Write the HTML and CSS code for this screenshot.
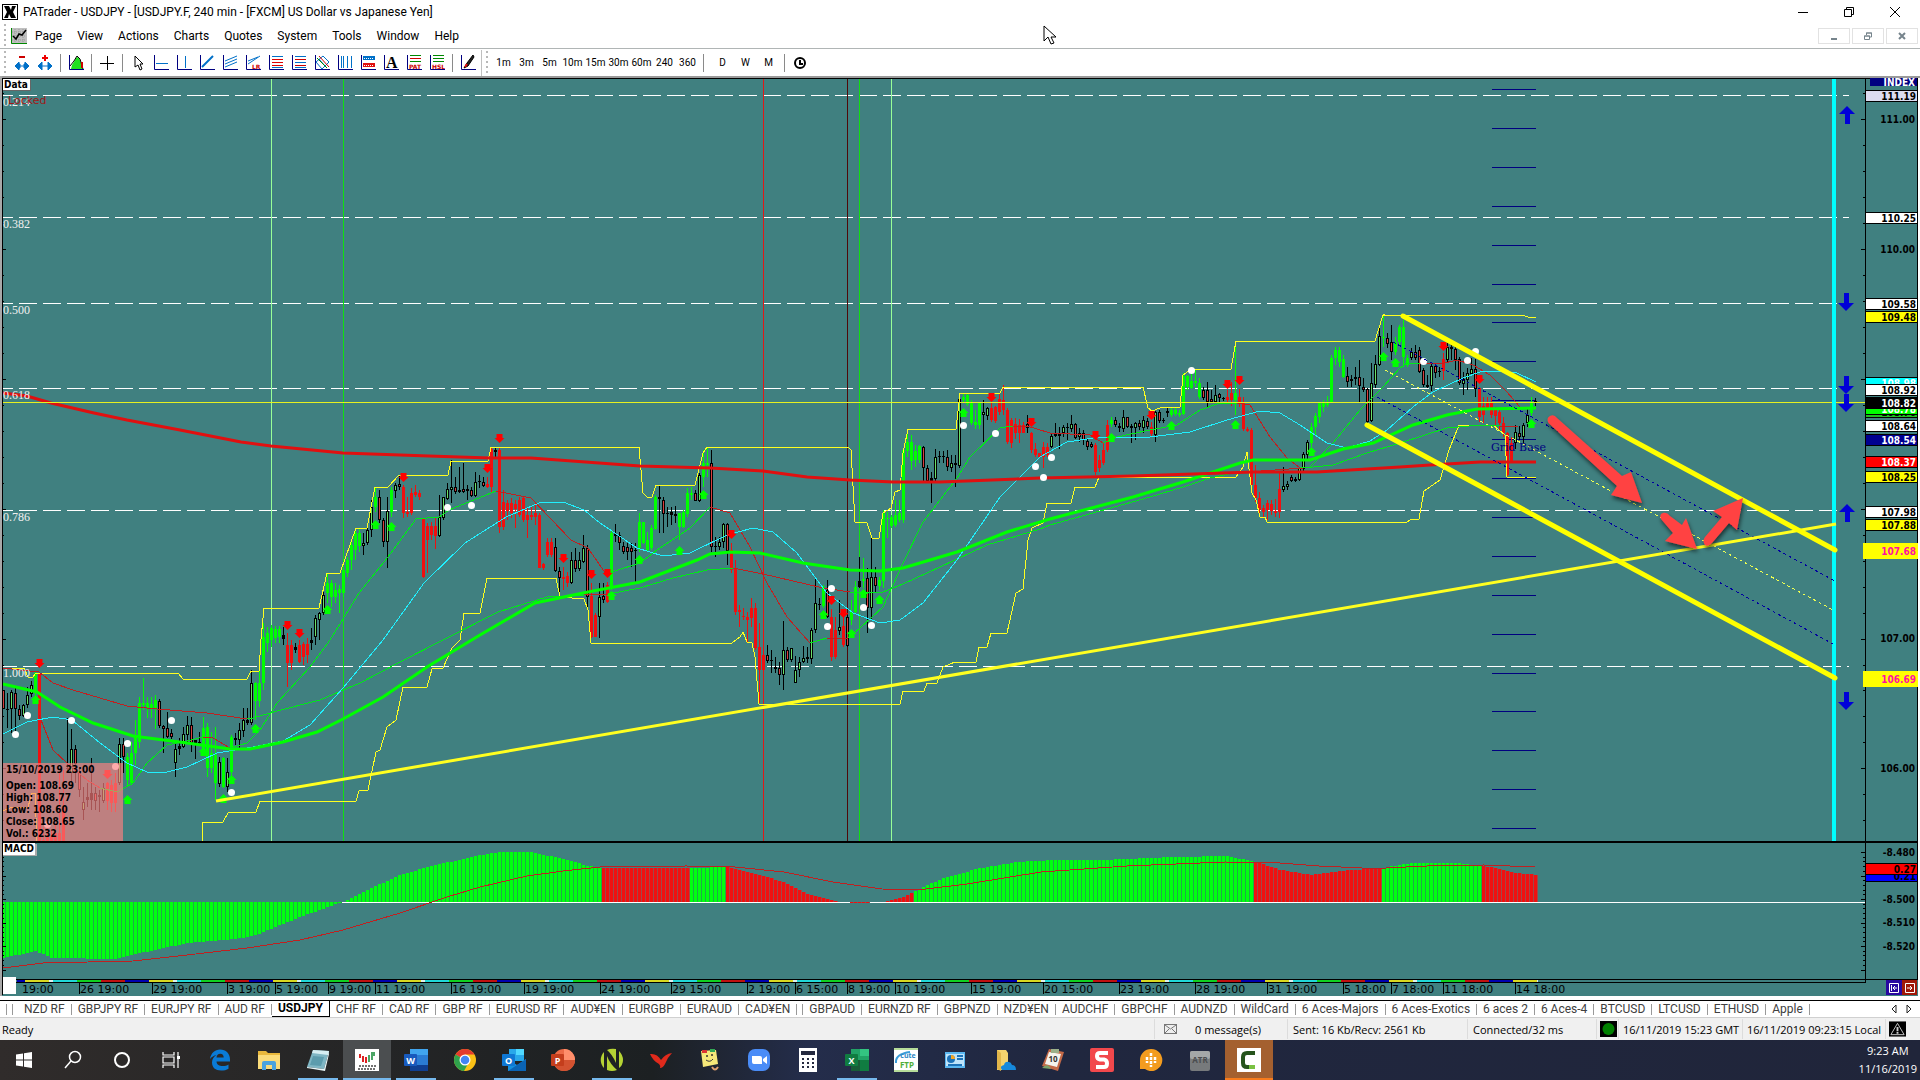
FILE: index.html
```html
<!DOCTYPE html>
<html lang="en">
<head>
    <meta charset="UTF-8">
    <meta name="viewport" content="width=device-width, initial-scale=1.0">
    <title>PATrader - USDJPY</title>
    <link rel="stylesheet" href="styles.css">
</head>
<body>
    <!-- Title bar -->
    <header class="title-bar">
        <svg class="app-icon" viewBox="0 0 16 16"><rect width="16" height="16" fill="#000"/><rect x="1" y="1" width="14" height="14" fill="#fff"/><path d="M2 2h5l2 4 1-4h4l-3 6 3 6H9L7 10l-1 4H2l3-6z" fill="#000"/></svg>
        <h1>PATrader - USDJPY - [USDJPY.F, 240 min - [FXCM] US Dollar vs Japanese Yen]</h1>
        <div class="window-buttons">
            <button aria-label="Minimize"><svg viewBox="0 0 12 12"><path d="M1 6.500h10"/></svg></button>
            <button aria-label="Restore"><svg viewBox="0 0 12 12"><path d="M1.500 3.500h7v7h-7zM3.500 3.500v-2h7v7h-2"/></svg></button>
            <button aria-label="Close"><svg viewBox="0 0 12 12"><path d="M1 1l10 10M11 1L1 11"/></svg></button>
        </div>
    </header>

    <!-- Menu -->
    <nav class="menu-bar">
        <span class="grip"></span>
        <svg class="menu-icon" viewBox="0 0 16 16"><rect width="16" height="16" fill="#c0c0c0"/><path d="M4 1v14M8 1v14M12 1v14M1 4h14M1 8h14M1 12h14" stroke="#999" stroke-dasharray="1 1"/><path d="M.5 0v15.500H16" stroke="#080" fill="none"/><path d="M2 8l3 3 3-5 3 1 4-5" stroke="#000" stroke-width="1.500" fill="none"/></svg>
        <a href="#">Page</a>
        <a href="#">View</a>
        <a href="#">Actions</a>
        <a href="#">Charts</a>
        <a href="#">Quotes</a>
        <a href="#">System</a>
        <a href="#">Tools</a>
        <a href="#">Window</a>
        <a href="#">Help</a>
        <div class="child-buttons">
            <button aria-label="Minimize chart"><svg viewBox="0 0 10 10"><path d="M2 8h6" stroke-width="2"/></svg></button>
            <button aria-label="Restore chart"><svg viewBox="0 0 10 10"><path d="M1.500 5h5v3.500h-5zM1 5h6M3.500 4V2h5v4H7M3 2h6"/></svg></button>
            <button aria-label="Close chart"><svg viewBox="0 0 10 10"><path d="M2 2l6 6M8 2L2 8" stroke-width="2"/></svg></button>
        </div>
    </nav>

    <!-- Drawing tools and time frames -->
    <div class="toolbar">
        <span class="grip"></span>
        <div class="tools" id="tools"></div>
        <span class="separator tall"></span>
        <span class="grip"></span>
        <div class="frames">
            <button>1m</button><button>3m</button><button>5m</button><button>10m</button><button>15m</button><button>30m</button><button>60m</button><button>240</button><button>360</button>
        </div>
        <span class="separator"></span>
        <div class="frames">
            <button>D</button><button>W</button><button>M</button>
        </div>
        <span class="separator"></span>
        <button class="tool" aria-label="Time"><svg viewBox="0 0 16 16"><circle cx="8" cy="8" r="5" fill="none" stroke="#000" stroke-width="2"/><path d="M8 5v4h3" fill="none" stroke="#000" stroke-width="2"/></svg></button>
    </div>

    <!-- Price chart and MACD -->
    <main class="chart">
        <svg id="chart" viewBox="0 76 1920 920" role="img" aria-label="USDJPY 240 min chart"></svg>
    </main>

    <nav class="tabs">
        <span class="divider"></span><span class="divider"></span>
        <a href="#">NZD RF</a>
        <a href="#">GBPJPY RF</a>
        <a href="#">EURJPY RF</a>
        <a href="#">AUD RF</a>
        <a href="#" class="active">USDJPY</a>
        <a href="#">CHF RF</a>
        <a href="#">CAD RF</a>
        <a href="#">GBP RF</a>
        <a href="#">EURUSD RF</a>
        <a href="#">AUD¥EN</a>
        <a href="#">EURGBP</a>
        <a href="#">EURAUD</a>
        <a href="#">CAD¥EN</a>
        <span class="divider second"></span>
        <a href="#">GBPAUD</a>
        <a href="#">EURNZD RF</a>
        <a href="#">GBPNZD</a>
        <a href="#">NZD¥EN</a>
        <a href="#">AUDCHF</a>
        <a href="#">GBPCHF</a>
        <a href="#">AUDNZD</a>
        <a href="#">WildCard</a>
        <a href="#">6 Aces-Majors</a>
        <a href="#">6 Aces-Exotics</a>
        <a href="#">6 aces 2</a>
        <a href="#">6 Aces-4</a>
        <a href="#">BTCUSD</a>
        <a href="#">LTCUSD</a>
        <a href="#">ETHUSD</a>
        <a href="#">Apple</a>
        <div class="tab-scroll">
            <button aria-label="Scroll left"><svg viewBox="0 0 8 10"><path d="M6 1L2 5l4 4z"/></svg></button>
            <button aria-label="Scroll right"><svg viewBox="0 0 8 10"><path d="M2 1l4 4-4 4z"/></svg></button>
        </div>
    </nav>

    <footer class="status-bar">
        <span class="ready">Ready</span>
        <span class="cell messages"><svg viewBox="0 0 14 12"><rect x=".5" y="1.500" width="12" height="9" fill="#eee" stroke="#777"/><path d="M1 2l5.500 4L12 2M1 10l4-4M12 10L8 6" stroke="#777" fill="none"/></svg>0 message(s)</span>
        <span class="cell traffic">Sent: 16 Kb/Recv: 2561 Kb</span>
        <span class="cell connection">Connected/32 ms</span>
        <span class="cell lamp"><svg viewBox="0 0 17 16"><rect width="17" height="16" fill="#000"/><ellipse cx="8.500" cy="8" rx="6" ry="6" fill="#008000"/></svg></span>
        <span class="cell gmt">16/11/2019 15:23 GMT</span>
        <span class="cell local">16/11/2019 09:23:15 Local</span>
        <span class="cell alert"><svg viewBox="0 0 18 16"><rect width="18" height="16" fill="#000"/><path d="M9 2l7 12H2z" fill="none" stroke="#ccc"/><path d="M9 6v4M9 11v2" stroke="#ccc" stroke-width="2"/></svg></span>
    </footer>

    <!-- Windows taskbar -->
    <div class="taskbar">
        <div class="taskbar-items">
            <button class="task" aria-label="Start"><svg viewBox="0 0 24 24"><path d="M4 6.500l7-1v6H4zM12 5.300l8-1.300v7.500h-8zM4 12.500h7v6l-7-1zM12 12.500h8V20l-8-1.300z" fill="#fff"/></svg></button>
            <button class="task" aria-label="Search"><svg viewBox="0 0 24 24"><circle cx="14" cy="9" r="5.500" fill="none" stroke="#fff" stroke-width="1.500"/><path d="M10 13l-6 7" stroke="#fff" stroke-width="1.500"/></svg></button>
            <button class="task" aria-label="Cortana"><svg viewBox="0 0 24 24"><circle cx="12" cy="12" r="7" fill="none" stroke="#fff" stroke-width="2"/></svg></button>
            <button class="task" aria-label="Task view"><svg viewBox="0 0 24 24"><path d="M4 4v3h11V4M4 20v-3h11v3M4 9h11v6H4zM19 4v16" fill="none" stroke="#fff" stroke-width="1.200"/><path d="M18 8h3v3h-3z" fill="#fff"/></svg></button>
            <button class="task" aria-label="Edge"><svg viewBox="0 0 24 24"><path d="M2 11C3 5 7 1.500 12 1.500c6 0 10 4 10 10v2H8.500c.3 3.500 3 4.500 6 4.500 2.500 0 4.500-.7 6-1.600v4.300C18.500 22 16 22.500 13 22.500 7.500 22.500 4 19.500 4 14.500c0-3.500 2-6 4.500-7.500C6 7.500 3.500 9 2 11zm6.500-1.500h7.200C15.700 7 14.500 5.700 12.300 5.700 10 5.700 8.700 7.200 8.500 9.500z" fill="#0a7bd6"/></svg></button>
            <button class="task" aria-label="File Explorer"><svg viewBox="0 0 24 24"><path d="M1 3h8l2 2h12v16H1z" fill="#e9b83c"/><path d="M1 7h22v14H1z" fill="#fbdc7a"/><path d="M5 22v-7q0-2 2-2h10q2 0 2 2v7h-4v-5H9v5z" fill="#4aa3df"/></svg></button>
            <button class="task running" aria-label="Notepad"><svg viewBox="0 0 24 24"><path d="M7 2l16 1-5 18L1 19z" fill="#7fb6c4"/><path d="M7 2l16 1-1 4L6 5z" fill="#d6eef2"/><path d="M1 19l17 2 5-18v3l-4 17L1 20z" fill="#e8f6f8"/><path d="M7 8l11 1-3 9-11-1z" fill="#5c9cad"/></svg></button>
            <button class="task running current" aria-label="PATrader"><svg viewBox="0 0 24 24"><rect y="1" width="24" height="22" fill="#fff"/><path d="M5 6v4M8 8v6M11 9v6" stroke="#d22" stroke-width="2"/><path d="M14 7v7M17 4v8M19 4v4" stroke="#183" stroke-width="1.500"/><path d="M4 18h17M3 21h18" stroke="#444" stroke-width="1.500" stroke-dasharray="2 1"/></svg></button>
            <button class="task running" aria-label="Word"><svg viewBox="0 0 24 24"><path d="M6 1h18v22H6z" fill="#2b7cd3"/><path d="M6 1h18v6H6z" fill="#41a5ee"/><path d="M6 17h18v6H6z" fill="#103f91"/><rect y="6" width="13" height="12" rx="1" fill="#185abd"/><text x="6.500" y="15.500" class="letter">W</text></svg></button>
            <button class="task" aria-label="Chrome"><svg viewBox="0 0 24 24"><circle cx="12" cy="12" r="11" fill="#fbc116"/><path d="M12 12L2.500 6.500A11 11 0 0 1 21.500 6.500H12z" fill="#e33b2e"/><path d="M12 12L2.500 6.500A11 11 0 0 0 11 23l5-9z" fill="#2fa24c"/><circle cx="12" cy="12" r="5.500" fill="#fff"/><circle cx="12" cy="12" r="4.300" fill="#4285f4"/></svg></button>
            <button class="task running" aria-label="Outlook"><svg viewBox="0 0 24 24"><path d="M7 1h15v12H7z" fill="#28a8ea"/><path d="M14 1h8v6h-8z" fill="#50d9ff"/><path d="M6 11l9 6 9-6v12H6z" fill="#1490df"/><path d="M6 23l18-12v12z" fill="#0a64b5"/><rect y="6" width="13" height="12" rx="1" fill="#0f78d4"/><text x="6.500" y="15.500" class="letter">O</text></svg></button>
            <button class="task" aria-label="PowerPoint"><svg viewBox="0 0 24 24"><circle cx="13" cy="12" r="11" fill="#ed6c47"/><path d="M13 1a11 11 0 0 1 11 11H13z" fill="#ff8f6b"/><path d="M2 12h22a11 11 0 0 1-22 0z" fill="#d35230"/><rect y="6" width="13" height="12" rx="1" fill="#c43e1c"/><text x="6.500" y="15.500" class="letter">P</text></svg></button>
            <button class="task running" aria-label="NinjaTrader"><svg viewBox="0 0 24 24"><path d="M4 4a11.500 11.500 0 0 0 0 16z" fill="#b5d334"/><path d="M7 2Q11 0 16 1v14Q12 6 7 2z" fill="#b5d334"/><path d="M7 8q3 8 10 14-5 2-10 0z" fill="#b5d334"/><path d="M19 3q4 4 4 9t-4 8z" fill="#b5d334"/></svg></button>
            <button class="task" aria-label="Red bird"><svg viewBox="0 0 24 24"><path d="M1 6q7-1 11 6Q16 6 23 5q-5 5-7 11-2 4-5 4 1-2-1-4Q4 13 1 6z" fill="#e02a1c"/></svg></button>
            <button class="task" aria-label="Notes"><svg viewBox="0 0 24 24"><path d="M3 3l15-1 2 14-15 3z" fill="#f6e87a"/><path d="M4 2h5v3H4z" fill="#d33"/><path d="M12 1h5v3h-5z" fill="#3a5"/><circle cx="9" cy="8" r="1" fill="#333"/><circle cx="14" cy="7" r="1" fill="#333"/><path d="M8 12q4 3 7-1" fill="none" stroke="#333"/><path d="M14 19q3 5 6 0" fill="none" stroke="#e0a070" stroke-width="2"/></svg></button>
            <button class="task" aria-label="Zoom"><svg viewBox="0 0 24 24"><rect x="1" y="1" width="22" height="22" rx="7" fill="#4a8cf7"/><path d="M5 8h8q2 0 2 2v6H7q-2 0-2-2zM16 11l4-3v8l-4-3z" fill="#fff"/></svg></button>
            <button class="task" aria-label="Calculator"><svg viewBox="0 0 24 24"><path d="M3 0h18v24H3z" fill="#fff"/><path d="M5 3h14v4H5z" fill="#24293f"/><path d="M6 11h13M6 15h13M6 19h13" stroke="#24293f" stroke-width="2" stroke-dasharray="2 3"/></svg></button>
            <button class="task running" aria-label="Excel"><svg viewBox="0 0 24 24"><path d="M6 1h18v22H6z" fill="#21a366"/><path d="M15 1h9v7h-9z" fill="#33c481"/><path d="M6 12h9v11H6z" fill="#185c37"/><path d="M15 12h9v11h-9z" fill="#107c41"/><rect y="6" width="13" height="12" rx="1" fill="#107c41"/><text x="6.500" y="15.500" class="letter">X</text></svg></button>
            <button class="task" aria-label="CuteFTP"><svg viewBox="0 0 24 24"><rect width="24" height="24" fill="#fff"/><path d="M0 0h24v2H0zM0 22h24v2H0z" fill="#b6dc9a"/><path d="M2 15Q1 6 16 4" fill="none" stroke="#3a9bd8" stroke-width="2"/><text x="14" y="10" class="logo cute">cute</text><text x="13" y="20" class="logo ftp">FTP</text></svg></button>
            <button class="task" aria-label="Control panel"><svg viewBox="0 0 24 24"><rect x="2" y="4" width="20" height="16" fill="#5ab7f0"/><rect x="3" y="6" width="18" height="12" fill="#bfe4fa"/><circle cx="8" cy="11" r="4" fill="#1c72b8"/><path d="M8 11V7a4 4 0 0 1 4 4z" fill="#f5a623"/><path d="M14 8h6M14 11h6M5 17h14" stroke="#1c72b8" stroke-width="2"/></svg></button>
            <button class="task" aria-label="OneDrive folder"><svg viewBox="0 0 24 24"><path d="M5 2h9l2 3v17H5z" fill="#f5d36e"/><path d="M5 2l4 3v18l-4-2z" fill="#e2b64a"/><path d="M10 22q-3-4 2-5 1-4 5-3 2 0 3 3 4 0 4 5z" fill="#1689dc"/></svg></button>
            <button class="task" aria-label="Planner"><svg viewBox="0 0 24 24"><path d="M8 1l15 3-6 19-16-5z" fill="#c46a48"/><path d="M8 4l12 2-4 13-12-3z" fill="#f4f4ee"/><path d="M10 1h8v4h-8z" fill="#9ab08a"/><text x="12" y="14" class="logo ten">10</text><path d="M1 20q6-6 9 1z" fill="#7ea36a"/></svg></button>
            <button class="task" aria-label="Snagit"><svg viewBox="0 0 24 24"><rect width="24" height="24" rx="2" fill="#f2484c"/><path d="M18 5h-8Q7 5 7 8t3 3.500h4q3 .5 3 4T14 19H6" fill="none" stroke="#fff" stroke-width="4"/></svg></button>
            <button class="task" aria-label="Orange app"><svg viewBox="0 0 24 24"><path d="M12 1a11 11 0 1 1-6 20H1v-9A11 11 0 0 1 12 1z" fill="#f39c1f"/><path d="M8 9v6M12 5v14M16 9v6" stroke="#fff" stroke-width="2.500" stroke-dasharray="3 1"/></svg></button>
            <button class="task" aria-label="ATR"><svg viewBox="0 0 24 24"><rect x="2" y="3" width="20" height="20" rx="2" fill="#777a7c"/><rect x="2" y="3" width="20" height="8" rx="2" fill="#a4a7a8"/><text x="12" y="15" class="logo atr">ATR</text></svg></button>
            <button class="task recording" aria-label="Camtasia"><svg viewBox="0 0 24 24"><rect width="24" height="24" fill="#fff"/><path d="M18 5h-8Q6 5 6 9v6q0 4 4 4h8" fill="none" stroke="#26541c" stroke-width="4"/><path d="M12 17h6v4h-6z" fill="#7ac143"/></svg></button>
        </div>
        <div class="clock"><span>9:23 AM</span><span>11/16/2019</span></div>
    </div>

    <svg class="pointer" viewBox="0 0 14 20"><path d="M1 1v15l4-4 3 7 3-1-3-6h5z" fill="#fff" stroke="#000"/></svg>

    <script src="script.js"></script>
</body>
</html>
```

FILE: styles.css
```css
* {
    box-sizing: border-box;
}

body {
    margin: 0;
    min-height: 100vh;
    display: flex;
    flex-direction: column;
    background-color: #ffffff;
    color: #000000;
    font-family: Roboto, "Open Sans", sans-serif;
    font-size: 12px;
    overflow-x: hidden;
}

a {
    color: inherit;
    text-decoration: none;
}

button {
    margin: 0;
    padding: 0;
    border: none;
    background: none;
    color: inherit;
    font: inherit;
    cursor: pointer;
}

svg {
    display: block;
}

/* Title bar */
.title-bar {
    display: flex;
    align-items: center;
    height: 24px;
    padding-left: 2px;
    gap: 5px;
}

.app-icon {
    width: 16px;
    height: 16px;
}

h1 {
    margin: 0;
    font-size: 12px;
    font-weight: normal;
}

.window-buttons {
    display: flex;
    margin-left: auto;
    padding-right: 2px;
}

.window-buttons button {
    width: 46px;
    height: 20px;
    display: flex;
    justify-content: center;
    align-items: center;
}

.window-buttons svg {
    width: 12px;
    height: 12px;
    fill: none;
    stroke: #000;
}

/* Menu */
.menu-bar {
    display: flex;
    align-items: center;
    height: 24px;
    padding: 0 2px 0 4px;
}

.menu-icon {
    width: 16px;
    height: 16px;
    margin: 0 8px 0 5px;
}

.menu-bar a {
    margin-right: 15px;
}

.child-buttons {
    display: flex;
    gap: 2px;
    margin-left: auto;
}

.child-buttons button {
    width: 32px;
    height: 16px;
    border: 1px solid #e2e2e2;
    display: flex;
    justify-content: center;
    align-items: center;
}

.child-buttons svg {
    width: 10px;
    height: 10px;
    fill: none;
    stroke: #76848c;
}

.grip {
    width: 2px;
    height: 24px;
    background: repeating-linear-gradient(#b8b8b8 0 2px, #fff 2px 5px);
}

/* Toolbar */
.toolbar {
    display: flex;
    align-items: center;
    height: 28px;
    padding-left: 4px;
    border-top: 1px solid #b0b5b5;
}

.tools,
.frames {
    display: flex;
    align-items: center;
}

.tools {
    padding-left: 4px;
}

.tool {
    width: 23px;
    height: 24px;
    display: flex;
    justify-content: center;
    align-items: center;
}

.tool svg {
    width: 16px;
    height: 16px;
}

.frames {
    padding-left: 4px;
}

.frames button {
    width: 23px;
    font-size: 10px;
}

.separator {
    width: 1px;
    height: 18px;
    margin: 0 3px 0 4px;
    background-color: #8a8a8a;
}

.separator.tall {
    height: 26px;
    margin: 0 4px 0 2px;
    background-color: #c0c0c0;
}

.bold-tool {
    font: bold 16px "Liberation Serif", serif;
}

.tag {
    font: bold 6px "DejaVu Sans", sans-serif;
    fill: #c00;
}

/* Chart */
.chart svg {
    width: 100%;
    height: auto;
}

#chart text {
    white-space: pre;
}

.crisp {
    shape-rendering: crispEdges;
}

.line {
    fill: none;
    stroke-width: 1;
    shape-rendering: crispEdges;
}

.thick {
    stroke-width: 3;
    shape-rendering: auto;
}

.channel {
    stroke-width: 5;
    stroke-linecap: round;
    shape-rendering: auto;
}

.price-text {
    font: bold 10px "DejaVu Sans Condensed", "DejaVu Sans", sans-serif;
    text-anchor: end;
}

.date-text {
    font: 11px "DejaVu Sans", sans-serif;
}

.level-text {
    font: 12px "Liberation Serif", serif;
    fill: #f0f0f0;
}

.locked-text {
    font: 11px "DejaVu Sans", sans-serif;
    fill: #a01818;
}

.grid-base {
    font: 11px "DejaVu Serif", serif;
    fill: #000080;
}

.info-text {
    font: bold 10px "DejaVu Sans Condensed", "DejaVu Sans", sans-serif;
}

/* Page tabs */
.tabs {
    display: flex;
    align-items: center;
    height: 18px;
    margin-top: 4px;
    padding-left: 6px;
    border-top: 1px solid #000;
    border-bottom: 1px solid #d0d0d0;
    background-color: #fff;
    color: #404040;
}

.divider {
    flex: none;
    width: 6px;
    height: 11px;
    border-left: 1px solid #999;
}

.divider.second {
    border-left: none;
    border-right: 1px solid #999;
}

.tabs a {
    display: flex;
    align-items: center;
    height: 11px;
    padding: 0 6px;
    border-right: 1px solid #999;
    white-space: nowrap;
}

.tabs a.active {
    height: 17px;
    margin-top: -1px;
    border-right: 1px solid #000;
    border-bottom: 1px solid #000;
    color: #000;
    font-weight: bold;
}

.tab-scroll {
    display: flex;
    gap: 7px;
    margin-left: auto;
    padding-right: 7px;
}

.tab-scroll svg {
    width: 8px;
    height: 10px;
    fill: none;
    stroke: #222;
}

/* Status bar */
.status-bar {
    display: flex;
    align-items: center;
    height: 22px;
    background-color: #f0f0f0;
    font-family: "Open Sans", "Noto Sans", sans-serif;
    font-size: 11px;
}

.ready {
    flex: 1;
    padding-left: 2px;
}

.cell {
    display: flex;
    align-items: center;
    height: 20px;
    padding-left: 5px;
    border-left: 1px solid #dcdcdc;
    white-space: nowrap;
}

.messages {
    width: 133px;
    gap: 17px;
    padding-left: 9px;
}

.messages svg {
    width: 14px;
    height: 12px;
}

.traffic {
    width: 180px;
}

.connection {
    width: 129px;
}

.lamp {
    width: 22px;
    padding-left: 3px;
}

.lamp svg,
.alert svg {
    width: 17px;
    height: 16px;
}

.gmt {
    width: 124px;
    padding-left: 4px;
}

.local {
    width: 143px;
    padding-left: 4px;
}

.alert {
    width: 35px;
    padding-left: 3px;
}

/* Taskbar */
.taskbar {
    display: flex;
    flex: 1;
    min-height: 40px;
    background: linear-gradient(90deg, #302c2b 0, #1c2022 34%, #242d4b 42%, #20273f 55%, #20253a 100%);
    color: #fff;
}

.taskbar-items {
    display: flex;
    gap: 1px;
}

.task {
    width: 48px;
    height: 40px;
    display: flex;
    justify-content: center;
    align-items: center;
    border-top: 3px solid transparent;
    border-bottom: 3px solid transparent;
}

.task svg {
    width: 24px;
    height: 24px;
}

.running {
    background: linear-gradient(#76b9ed, #76b9ed) 50% 100% / 40px 2px no-repeat border-box;
}

.current {
    background: linear-gradient(#76b9ed, #76b9ed) 50% 100% / 48px 2px no-repeat border-box #4b4e50;
}

.recording {
    background: linear-gradient(#f77b1c, #f77b1c) 50% 100% / 48px 2px no-repeat border-box #a4602f;
}

.letter {
    font: bold 9px "Open Sans", sans-serif;
    fill: #fff;
    text-anchor: middle;
}

.logo {
    font: bold 8px "Open Sans", sans-serif;
    text-anchor: middle;
}

.cute {
    font-size: 7px;
    fill: #2b86c5;
}

.ftp {
    fill: #4fae3a;
}

.ten {
    fill: #333;
}

.atr {
    fill: #4a4c4e;
}

.clock {
    display: flex;
    flex-direction: column;
    justify-content: center;
    align-items: center;
    margin-left: auto;
    padding-right: 3px;
    font-family: "Open Sans", "Noto Sans", sans-serif;
    font-size: 11px;
    line-height: 18px;
}

/* Mouse pointer lies over the page */
.pointer {
    position: absolute;
    left: 1043px;
    top: 25px;
    width: 14px;
    height: 20px;
}
```

FILE: script.js
```javascript
const svg = document.getElementById('chart');
let out = '';

function rect(x, y, w, h, fill) {
    out += `<rect class="crisp" x="${x}" y="${y}" width="${w}" height="${h}" fill="${fill}"/>`;
}

function line(points, color, cls = '', extra = '') {
    out += `<polyline class="line ${cls}" points="${points}" stroke="${color}" ${extra}/>`;
}

function text(x, y, value, cls, fill = '') {
    out += `<text x="${x}" y="${y}" class="${cls}" ${fill ? `fill="${fill}"` : ''}>${value}</text>`;
}

const GREEN = '#00ff00';
const RED = '#e01010';

// ---------- Toolbar icons ----------
const axes = '<path d="M1.500 0v14.500H16" stroke="#000080" fill="none"/>';
const blue = 'stroke="#0070c8" fill="none"';
const tools = [
    ['Zoom out', '<path d="M5 2h6" stroke="#c00" stroke-width="2"/><path d="M1 11l4-4v2h1v4H5v2zM15 11l-4-4v2h-1v4h1v2zM6 11h4" stroke="#0070c8" fill="#0070c8"/>'],
    ['Zoom in', '<path d="M5 3h6M8 0v6" stroke="#e00" stroke-width="2"/><path d="M1 11l4-4v8zM15 11l-4-4v8zM4 11h8" stroke="#0070c8" fill="#0070c8"/>'],
    null,
    ['Chart', axes + '<path d="M3 14l1-4 2-3 2-4 2-1 2 3 3 9z" fill="#20e020"/><path d="M2 11l4-5 3-5 3 3 3 10" stroke="#000" fill="none"/><path d="M14 7v6" stroke="#c00" stroke-width="2"/>'],
    null,
    ['Crosshair', '<path d="M8.500 1v14M1 8.500h14" stroke="#000"/>'],
    null,
    ['Select', '<path d="M5 1v11l3-2 2 5 2-1-2-5h3z" fill="#fff" stroke="#000"/>'],
    ['Horizontal line', axes + `<path d="M3 8.500h12" ${blue}/>`],
    ['Vertical line', axes + `<path d="M9.500 1v12" ${blue}/>`],
    ['Trend line', axes + `<path d="M3 12L14 1" ${blue} stroke-width="2"/>`],
    ['Channel', axes + `<path d="M3 6l12-5M3 9l12-5M3 12l12-5" ${blue}/>`],
    ['Regression', axes + `<path d="M3 9l12-8M3 6l10-4" ${blue}/><text x="7" y="14" class="tag">LR</text>`],
    ['Retracement', axes + `<path d="M4 1.500h11M4 12.500h11" ${blue}/><path d="M4 4.500h11M4 7.500h11M4 10.500h11" stroke="#d00"/>`],
    ['Expansion', axes + `<path d="M4 1.500h11M4 7.500h11M4 12.500h11" ${blue}/><path d="M4 4.500h11M4 10.500h11" stroke="#c00"/>`],
    ['Fan', axes + `<path d="M2 7L9 1l6 6-7 7zM5 4l7 8" ${blue}/><path d="M5 1l10 11" stroke="#c00"/><path d="M3 3l10 10" stroke="#080"/>`],
    ['Cycles', axes + `<path d="M4.500 1v12M6.500 1v12M10.500 1v12M14.500 1v12" ${blue}/>`],
    ['Zones', axes + '<path d="M3 1h12v4H3z" fill="#0070c8"/><path d="M3 8h12v4H3z" fill="#e01010"/><path d="M4 3.500h10M4 10.500h10" stroke="#fff" stroke-dasharray="1 1"/>'],
    ['Text', axes + '<text x="3" y="13" class="bold-tool">A</text>'],
    ['PAT', axes + '<path d="M4 .5h11M4 6.500h11" stroke="#080"/><path d="M4 3.500h11" stroke="#c00"/><text x="3" y="14" class="tag">PAT</text>'],
    ['HSL', axes + '<path d="M4 .5h11M4 3.500h11M4 6.500h11" stroke="#080"/><text x="3" y="14" class="tag">HSL</text>'],
    null,
    ['Format', axes + '<path d="M13 0L7 8l-3 5 4-2 6-9z" fill="#222" stroke="#000"/><path d="M5 12l2-3" stroke="#e01010" stroke-width="2"/>']
];

document.getElementById('tools').innerHTML = tools.map(t => t
    ? `<button class="tool" aria-label="${t[0]}"><svg viewBox="0 0 16 16">${t[1]}</svg></button>`
    : '<span class="separator"></span>').join('');

// ---------- Panes ----------
rect(0, 76, 1918, 920, '#408080');
rect(0, 76, 1920, 2, '#9a9a9a');
rect(0, 76, 2, 920, '#a8a8a8');
rect(2, 78, 1, 917, '#000');
rect(2, 78, 1916, 1, '#000');

// Session colours under the MACD pane
const sessions = [['#d8d820', 24], ['#e0f0f0', 4], ['#20d8d8', 24], ['#10d020', 24], ['#c01010', 24], ['#0000b0', 24]];
rect(17, 980, 8, 2, '#0000b0');
let sx = 25;
for (let i = 0; sx < 1538; i++) {
    const [color, w] = sessions[i % 6];
    rect(sx, 980, Math.min(w, 1538 - sx), 2, color);
    sx += w;
}
rect(3, 979, 1863, 1, '#000');
rect(3, 982, 1863, 1, '#000');
rect(1865, 979, 53, 1, '#000');

// Horizontal retracement levels
const levels = [[95, '0.214', 8], [217, '0.382', 8], [303, '0.500', 8], [388, '0.618', 8], [510, '0.786', 8], [666, '1.000', 4]];
levels.forEach(([y, label, offset]) => {
    line(`3,${y + 0.5} 1849,${y + 0.5}`, '#ffffff', '', `stroke-dasharray="18 6" stroke-dashoffset="${offset}"`);
});

// Vertical event lines
[[271, '#98ff98'], [343, '#10e010'], [763, '#e01818'], [847, '#500808'], [859, '#10e010'], [891, '#98ff98']].forEach(([x, c]) => rect(x, 79, 1, 763, c));

// Grid steps on the right
for (let i = 0; i < 20; i++) {
    rect(1492, Math.round(89 + i * 38.9), 44, 1, '#000080');
}

// ---------- Candles ----------
// type,high,top,bottom,low in thirds of a pixel below the base line of the run
const runs = [
    [3, 640, `r,150,150,208,208 k,160,206,210,265 g,150,155,208,280 r,140,158,208,275 r,195,208,228,240 g,193,195,228,230 g,140,165,195,205 g,123,135,163,170 G,96,98,155,170 R,98,98,605,605
    R,560,600,605,605 R,540,590,605,605 R,570,590,605,605 R,550,580,605,605 R,400,580,605,605 R,390,500,605,605 k,235,384,388,400 g,268,328,400,430 r,315,328,372,430 r,380,400,450,470 g,440,485,510,540 k,430,470,480,500 k,355,460,480,510 r,440,458,482,510 k,450,465,470,515 g,430,445,482,490 R,425,430,482,510 R,420,435,490,515 R,400,430,490,515 g,295,312,430,435 r,295,312,352,398 G,338,350,420,440 G,305,340,428,435 G,240,285,340,375 G,170,190,305,325 G,115,190,196,210 G,170,190,205,235 G,170,192,205,235 G,165,180,205,268 r,178,183,258,265 r,255,258,268,338 r,215,265,290,295 r,268,280,290,298 g,312,328,370,410 k,295,318,328,345 g,262,282,322,325 g,228,255,285,310 r,230,255,308,335 k,300,300,308,358 k,275,305,309,318
    G,230,265,340,345 G,250,262,385,410 G,275,340,385,400 G,260,345,430,480 g,350,365,432,440 G,350,355,440,445 g,355,395,440,455 G,285,290,395,410 k,280,295,299,315 g,250,270,300,330 g,205,240,272,290 k,205,240,248,255 g,90,130,250,255 G,125,128,182,240 G,90,130,182,200`],
    [263, 300, `G,970,1010,1150,1170 G,980,1000,1030,1055 G,975,985,1020,1040 G,978,988,1015,1030 G,978,988,1012,1030 k,980,1005,1018,1035 R,1000,1035,1090,1160 R,1020,1035,1090,1110 k,1030,1040,1050,1060 R,1020,1035,1085,1090 R,1025,1032,1070,1095 R,1015,1032,1065,1090 k,985,1020,1030,1050 g,945,955,1010,1035 g,935,938,960,1020 g,875,885,938,945
    G,820,850,880,910 G,840,848,890,920 G,850,870,890,910 G,855,868,880,940 G,805,810,880,890 G,770,780,820,830 G,725,735,780,810 G,690,700,750,780 G,688,700,738,755 g,700,730,738,765 g,685,690,730,735 g,600,620,690,710 G,560,590,620,635 r,570,592,660,670 r,655,660,725,740 g,590,632,725,805 G,560,570,635,650 g,548,555,572,595 r,525,552,560,570 R,555,560,640,655 R,590,635,642,650 R,565,580,640,645 R,555,575,585,590 R,570,578,592,600 R,655,655,830,835 R,670,678,720,820 R,665,678,705,720 R,655,678,708,748 g,585,650,708,710 g,590,592,655,660 g,550,568,597,600 g,480,560,570,610 r,530,560,575,582 r,500,570,575,580 r,490,568,575,580 k,555,568,572,600 r,560,570,588,590 g,515,545,588,590 k,525,543,547,565 r,532,547,558,560 R,530,553,560,565 R,440,448,560,580 k,440,450,455,475 R,440,450,680,700
    R,570,605,682,690 R,600,608,632,660 R,595,610,640,655 R,600,612,628,685 R,590,600,645,650 R,590,593,660,665 R,625,645,660,715 R,620,645,650,660 R,610,638,650,675 R,640,645,803,805 R,790,793,805,810 R,715,725,765,770 R,715,725,765,770 r,715,740,812,815 r,800,812,835,895 R,800,830,838,870 R,815,828,850,860 g,755,780,850,852 r,745,780,808,815 g,755,780,808,812 g,705,745,785,790 r,735,745,890,920 R,850,888,1010,1015 R,940,945,1010,1012 g,848,890,950,1015 r,850,887,900,910 R,845,855,905,910 G,690,700,860,870`],
    [615, 380, `k,432,463,467,485 r,455,465,490,510 r,485,498,515,522 r,490,500,515,540 r,490,505,515,560 k,490,510,514,605 G,400,425,505,515 G,425,425,490,492 G,455,480,510,515 G,435,443,505,510 G,345,350,448,450 k,315,352,358,460 r,350,360,402,460 k,380,398,402,440 k,380,395,405,435 k,378,403,407,430 G,400,400,440,480 G,390,395,440,445 G,325,340,402,410 G,320,340,344,360 r,330,340,362,364 g,280,285,362,365 G,210,250,290,320 G,205,250,255,290 r,210,250,500,515 k,470,498,502,530 g,470,485,500,510 g,428,432,485,505 r,430,432,512,555 R,490,510,570,580 R,540,565,695,705 R,675,690,695,740 R,685,708,712,720 R,695,710,720,785 R,655,685,715,740 R,670,685,805,810 R,730,800,870,970 R,710,825,870,875 r,795,825,842,850 k,810,840,844,878 k,830,862,868,880 r,845,865,885,915 g,722,810,885,930 r,800,810,840,845 g,803,805,840,845 g,828,870,908,910 g,830,845,870,892 g,797,835,845,850 r,800,832,838,850 g,745,750,838,852 g,595,670,750,760 k,655,672,676,690 G,615,620,678,685 r,600,630,712,715 R,688,710,830,842 R,710,750,830,838 g,660,740,752,765 R,690,738,795,800 r,705,710,798,800 G,660,695,720,735
    G,603,620,695,700 k,530,603,620,625 G,535,598,603,625 r,565,595,685,758 g,475,592,685,720 r,560,592,618,635 G,590,600,618,630 G,390,400,602,625 G,395,413,417,475 G,405,410,438,445 G,360,405,435,442 G,360,398,420,425 G,205,210,420,430 G,150,185,212,230 G,165,185,242,270 G,195,212,240,260 G,195,198,240,250 r,198,200,265,305 r,255,265,302,308 k,275,295,302,368 g,208,230,298,305 k,212,228,232,250 k,212,228,232,250 r,210,230,262,272 g,225,250,265,275 k,225,250,254,320 g,40,58,257,265`],
    [963, 300, `G,280,290,300,310 G,280,285,312,318 G,300,308,370,375 G,330,365,375,388 G,305,310,375,388 g,300,335,345,425 g,320,325,348,360 R,310,325,360,365 R,318,320,362,370 R,278,298,335,345 R,255,300,330,345 R,325,330,425,432 R,355,360,428,445 R,355,372,400,418 R,358,375,400,430 R,365,375,398,400 r,345,372,385,400 R,396,398,450,460 R,430,448,466,470 R,458,460,470,475 R,425,440,470,505 R,430,440,465,470 g,400,408,440,445 k,370,403,407,410 k,382,403,407,448 g,375,382,400,410 k,370,380,384,420 g,345,372,388,395 r,370,372,415,418 g,385,398,410,425 r,390,400,420,435 r,415,422,442,450 r,425,432,440,445 R,430,435,515,525 R,465,480,505,515 R,430,450,490,495 R,360,375,450,455 G,350,360,372,380 r,350,360,375,380 r,370,378,385,395 g,330,352,388,395 r,350,352,380,385 r,372,378,385,428 g,365,370,385,420 r,360,370,382,390 g,348,360,385,400 r,355,362,382,388 R,365,382,402,410 g,332,335,405,425 r,330,335,362,370 k,355,360,364,368 r,320,332,340,352 G,325,330,345,350 G,325,330,342,348 G,330,338,345,350 G,220,228,342,345 G,225,228,262,270
    G,215,242,265,268 G,210,242,250,260 G,235,248,292,298 r,260,270,295,300 r,245,270,305,322 r,270,298,305,308 g,255,285,305,308 r,278,282,295,305 k,290,294,298,302 R,270,292,300,305 R,245,280,300,318 G,125,280,300,345 R,268,290,312,320 R,290,305,388,392 R,380,388,392,395 R,385,390,555,580 R,495,555,595,605 R,575,595,630,645 R,615,625,635,650 R,600,610,630,660 R,600,612,632,645 R,598,632,640,650 R,520,568,635,655 g,500,558,570,575 g,543,553,560,570 r,525,532,542,545 k,530,538,542,545 g,500,505,540,542 g,455,462,508,515 g,420,425,465,480 G,370,380,430,440 G,340,348,382,405 G,305,310,350,370 G,300,308,320,335 G,288,305,315,320 G,165,175,308,310 G,142,150,175,195 G,142,150,185,200 G,165,178,230,235 r,200,228,245,260 r,225,238,243,260 g,200,230,238,255 r,180,230,258,305 r,235,260,270,275 r,265,268,365,368 g,190,250,362,365 g,165,192,255,265 g,85,108,195,198`],
    [1383, 300, `G,48,110,115,140 r,100,115,132,145 r,75,125,155,180 G,110,125,155,165 G,75,80,125,135 G,60,80,170,200 G,165,175,195,200 g,145,155,175,180 r,135,155,175,180 r,140,150,215,220 r,205,210,255,260 k,225,255,262,265 g,190,198,258,272 r,190,198,218,235 k,200,213,217,230 R,160,178,212,240 g,130,140,180,185 r,130,140,148,180 r,140,148,180,210 r,170,178,250,255 g,215,238,252,285 g,205,220,240,270 g,175,208,222,225 r,178,208,268,290 R,262,265,350,365 R,290,318,345,370 R,290,310,325,330 R,290,310,345,355 R,320,328,348,380 R,330,335,368,390 R,350,368,400,410 R,395,400,525,528 R,410,430,482,490 g,375,395,430,448 r,378,400,410,420 g,370,375,412,430 g,325,345,370,380 G,290,305,340,350 k,295,303,308,318`]
];

runs.forEach(([x0, base, data]) => {
    data.trim().split(/\s+/).forEach((item, i) => {
        const [type, ...v] = item.split(',');
        const [hi, top, bot, lo] = v.map(n => Math.round(base + n / 3));
        const x = x0 + i * 4;
        const h = Math.max(bot - top, 1);
        const solid = type === 'G' ? GREEN : type === 'R' ? '#f01010' : '#000';
        rect(x, hi, 1, Math.max(lo - hi, 1), solid);
        rect(x - 1, top, 3, h, solid);
        if ((type === 'g' || type === 'r') && h > 2) {
            rect(x, top + 1, 1, h - 2, type === 'g' ? '#68e068' : '#d84040');
        }
    });
});

// ---------- Indicators ----------
// Channel high and low
line('3,668 24,668 28,677 33,677 36,673 178,673 183,679 247,679 251,671 259,671 261,639 264,608 319,608 327,573 340,573 356,528 367,528 375,487 388,487 399,475 448,475 451,461 488,461 491,447 639,447 643,493 647,497 652,497 656,485 695,485 703,453 707,447 848,447 851,450 855,522 867,523 872,538 879,538 883,513 891,508 895,492 900,490 903,453 908,429 956,429 960,393 1000,393 1003,387 1143,387 1148,408 1152,411 1160,408 1180,407 1183,375 1190,370 1231,369 1236,341 1375,341 1383,315 1525,316 1528,317 1536,317', '#ffff20');
line('3,811 12,807 28,807 32,793 35,793 37,841', '#ffff20');
line('202,842 203,822 223,822 228,813 256,812 260,801 356,801 359,791 368,790 376,752 380,750 387,727 396,720 403,687 427,687 432,669 443,668 452,648 460,640 464,613 480,613 487,578 556,578 560,597 584,599 588,610 591,643 732,643 740,637 743,632 747,642 752,643 755,657 759,704 900,704 903,691 924,691 927,683 937,683 943,667 955,662 976,662 979,647 987,647 991,633 1007,633 1016,593 1023,589 1028,540 1032,528 1043,523 1047,503 1071,503 1075,487 1095,487 1099,477 1236,477 1243,467 1247,452 1252,493 1256,500 1260,517 1265,517 1267,522 1407,522 1410,520 1419,519 1424,491 1440,480 1449,450 1459,425 1493,425 1505,435 1507,477 1536,477', '#ffff20');

// Slow thin average
line('3,668 39,672 53,683 73,690 127,706 157,709 207,713 247,719', '#c02020');
line('247,719 253,718 277,711 320,700 360,683 400,662 443,640 498,612 547,597 584,595', '#00e818');
line('584,595 608,594', '#c02020');
line('608,594 640,588 673,578 707,570 733,568', '#00e818');
line('733,568 763,574 823,588 850,592', '#c02020');
line('850,592 883,592 903,584 940,567 987,545 1040,529 1050,525 1150,497 1183,487 1210,478 1233,473', '#00e818');
line('1233,473 1303,468', '#c02020');
line('1303,468 1333,465 1367,453 1400,443 1447,428 1480,425 1500,426', '#00e818');
line('1500,426 1518,426', '#c02020');

// Fast average
line('39,715 53,750 67,763 87,780 100,788', '#c02020');
line('100,788 117,792 133,783 147,763 167,745 187,741 203,737', '#00e818');
line('203,737 213,738 230,748', '#c02020');
line('230,748 247,743 260,730 277,703 310,667 330,640 359,593 388,557 416,519 439,517 449,510 496,491', '#00e818');
line('496,491 531,498 571,540 588,548 608,577', '#c02020');
line('608,577 612,572 640,563 657,550 690,528 710,507', '#00e818');
line('710,507 730,513 750,547 767,583 787,617 810,643', '#c02020');
line('810,643 827,638', '#00e818');
line('827,638 848,638', '#c02020');
line('848,638 860,628 883,607 903,563 923,522 957,478 970,457 1000,428 1013,426', '#00e818');
line('1013,426 1027,426 1050,433 1090,435 1103,443', '#c02020');
line('1103,443 1117,437 1150,430 1177,425 1200,410 1220,403 1237,403', '#00e818');
line('1237,403 1250,405 1270,437 1287,458 1300,468', '#c02020');
line('1300,468 1310,467 1333,443 1360,410 1383,387 1400,368 1407,363 1420,363', '#00e818');
line('1420,363 1440,364 1457,360 1473,365 1490,375 1507,392 1520,407', '#c02020');

line('3,734 27,722 53,717 72,720 100,743 127,763 147,772 163,773 187,767 217,753 253,747 283,741 310,725 343,688 383,640 424,583 465,543 506,517 539,503 563,502 584,510 600,523 637,548 663,556 690,553 727,535 753,528 773,532 797,553 827,593 853,613 880,623 900,620 923,603 957,560 1000,497 1040,457 1067,442 1100,437 1150,437 1190,432 1227,420 1260,411 1280,413 1300,425 1327,443 1347,448 1370,441 1387,430 1413,407 1433,392 1463,378 1480,372 1500,371 1517,373 1536,382', '#20f0ff');
line('3,684 37,692 60,707 93,723 133,736 187,743 230,749 250,749 283,742 317,732 343,719 383,697 427,667 480,635 535,603 588,592 640,582 697,560 710,554 730,552 760,553 803,563 850,570 880,571 903,568 957,552 1007,532 1050,519 1133,497 1183,482 1240,463 1253,460 1310,460 1343,449 1373,443 1413,425 1447,415 1477,409 1536,408', GREEN, 'thick');
line('3,393 27,396 51,403 94,413 127,420 180,430 241,442 271,446 343,453 429,456 490,458 531,458 640,466 710,468 763,471 807,477 850,480 893,482 940,482 1040,478 1133,476 1253,472 1317,472 1400,467 1430,465 1480,462 1536,462', RED, 'thick');
line('3,402.5 1865,402.5', '#e8f020');

// ---------- Signals ----------
const up = [[35,700],[255,729],[127,800],[203,752],[231,780],[223,799],[327,610],[375,525],[391,527],[611,596],[639,560],[679,551],[703,495],[823,615],[851,634],[863,594],[879,600],[963,413],[1111,438],[1171,426],[1235,425],[1311,452],[1383,357],[1395,363],[1531,424]];
const down = [[39,663],[107,774],[287,625],[299,633],[403,477],[487,468],[499,438],[563,558],[591,574],[607,573],[731,534],[831,600],[843,613],[991,397],[1031,422],[1095,435],[1151,415],[1227,384],[1239,380],[1443,346],[1479,379]];
const dots = [[27,715],[15,734],[71,720],[171,720],[127,743],[115,766],[47,824],[231,792],[447,507],[471,505],[831,588],[827,626],[863,607],[871,625],[963,425],[995,433],[1035,466],[1043,477],[1051,457],[1191,370],[1423,361],[1467,360],[1475,351]];
up.forEach(([x, y]) => out += `<path d="M${x + 0.5} ${y - 5}l5 5h-2v4h-6v-4h-2z" fill="${GREEN}"/>`);
down.forEach(([x, y]) => out += `<path d="M${x + 0.5} ${y + 5}l5-5h-2v-4h-6v4h-2z" fill="#ff0000"/>`);
dots.forEach(([x, y]) => out += `<circle cx="${x + 0.5}" cy="${y + 0.5}" r="3.500" fill="#fff"/>`);

// ---------- Trend lines ----------
rect(1832, 79, 4, 763, '#00ffff');
line('1393,342 1835,581', '#0000a0', '', 'stroke-dasharray="3 3"');
line('1385,370 1835,611', '#f0ff50', '', 'stroke-dasharray="3 3"');
line('1377,397 1835,645', '#0000a0', '', 'stroke-dasharray="3 3"');
line('216,801 1836,524', '#ffff20', 'thick');
line('1403,316 1835,550', '#ffff00', 'channel');
line('1367,425 1835,678', '#ffff00', 'channel');
text(1491, 451, 'Grid Base', 'grid-base');

[[106, 1], [504, 1], [293, 0], [376, 0], [394, 0], [692, 0]].forEach(([y, isUp]) => {
    out += isUp
        ? `<path d="M1847 ${y}l8 8h-5v10h-5v-10h-6z" fill="#0000d8"/>`
        : `<path d="M1846 ${y + 18}l8-8h-5v-10h-5v10h-6z" fill="#0000d8"/>`;
});

// Hand drawn arrows
out += '<defs><filter id="shadow" x="-20%" y="-20%" width="150%" height="150%"><feDropShadow dx="1" dy="3" stdDeviation="2" flood-opacity=".6"/></filter></defs>';
out += `<g fill="#ff4242" filter="url(#shadow)">
    <path d="M1548.500 423Q1546 418 1550 416Q1554 414 1557 418L1622 476L1631 472L1642 503L1611 495L1617 486Z"/>
    <path d="M1661 519Q1659 514 1663 513Q1667 512 1670 516L1682 525L1686 518L1697 549L1665 541L1673 533Z"/>
    <path d="M1705 545Q1702 541 1705 537L1722 517L1713 511L1743 498L1737 530L1729 523L1712 543Q1708 547 1705 545Z"/>
</g>`;

// ---------- MACD ----------
const macd = [[3,958],[35,951],[52,958],[117,959],[140,953],[187,943],[213,941],[233,939],[253,936],[277,926],[300,917],[333,905],[343,902],[373,887],[400,875],[427,867],[480,855],[500,852],[530,852],[563,859],[588,866],[601,868],[688,868],[726,867],[747,872],[784,882],[808,894],[833,901],[857,903],[882,902],[900,898],[914,891],[943,878],[980,868],[1016,862],[1053,860],[1102,860],[1175,857],[1225,856],[1253,861],[1280,870],[1311,875],[1340,871],[1380,868],[1410,863],[1455,863],[1482,866],[1495,868],[1510,872],[1536,875]];
const redRanges = [[600, 688], [726, 914], [1253, 1380], [1482, 1540]];

function macdAt(x) {
    const i = Math.max(1, macd.findIndex(p => p[0] >= x));
    const [x1, y1] = macd[i - 1];
    const [x2, y2] = macd[i];
    return Math.round(y1 + (y2 - y1) * (x - x1) / (x2 - x1));
}

rect(3, 902, 1862, 1, '#fff');
for (let x = 3; x < 1537; x += 4) {
    const y = macdAt(x);
    const top = Math.min(y, 902);
    const h = Math.abs(902 - y);
    const red = redRanges.some(([a, b]) => x >= a && x < b);
    rect(x - 1, top, 3, h, red ? '#f01010' : '#00ff10');
    rect(x + 2, top, 1, h, red ? '#a04848' : '#20a848');
}
line('3,968 43,963 133,961 187,955 247,948 300,940 343,930 400,913 447,897 480,887 527,876 563,871 600,867 686,866 735,867 784,872 833,882 882,889 918,890 967,884 1041,872 1127,866 1225,862 1280,863 1319,866 1362,868 1386,868 1427,866 1484,865 1535,867', '#c02020');

// ---------- Axes ----------
rect(2, 841, 1916, 2, '#000');
rect(2, 78, 1, 905, '#000');
rect(1865, 78, 1, 905, '#000');
rect(1917, 78, 1, 902, '#000');
for (let i = 0; i < 29; i++) {
    const y = Math.round(93.4 + i * 25.960);
    const w = i % 5 === 1 ? 4 : 2;
    rect(1865 - w, y, w, 1, '#000');
    rect(3, y, w - 1, 1, '#000');
}
for (let i = 0; i < 26; i++) {
    const y = Math.round(852 + i * 4.7);
    const w = i % 5 === 0 ? 4 : 2;
    rect(1865 - w, y, w, 1, '#000');
    rect(3, y, w - 1, 1, '#000');
}

[[119, '111.00'], [249, '110.00'], [638, '107.00'], [768, '106.00'], [852, '-8.480'], [899, '-8.500'], [922, '-8.510'], [946, '-8.520']].forEach(([y, t]) => text(1915, y + 4, t, 'price-text'));

rect(1870, 78, 47, 8, '#000080');
text(1915, 86, 'INDEX', 'price-text', '#fff');

// centre, label, background, text colour
const prices = [
    [96, '111.19', '#dcdcf0', '#000'], [218, '110.25', '#fff', '#000'], [304, '109.58', '#fff', '#000'], [317, '109.48', '#ffff00', '#000'],
    [383, '108.98', '#00ffff', '#fff'], [390, '108.92', '#fff', '#000'], [412, '108.76', '#20c020', '#000'], [409, '108.78', '#00ff00', '#fff'],
    [403, '108.82', '#000', '#fff'], [426, '108.64', '#fff', '#000'], [440, '108.54', '#000090', '#fff'], [462, '108.37', '#ff0000', '#fff'],
    [477, '108.25', '#ffff00', '#000'], [512, '107.98', '#fff', '#000'], [525, '107.88', '#ffff00', '#000'],
    [876, '0.21', '#0000ff', '#000'], [869, '0.27', '#ff0000', '#000']
];
prices.forEach(([y, label, bg, color]) => {
    rect(1865, y - 6, 53, 12, '#000');
    rect(1866, y - 5, 51, 10, bg);
    text(1916, y + 4, label, 'price-text', color);
});
[[551, '107.68'], [679, '106.69']].forEach(([y, label]) => {
    rect(1863, y - 8, 55, 16, '#ffff00');
    text(1916, y + 4, label, 'price-text', '#ff10a0');
});

// Dates
text(22, 993, '19:00', 'date-text');
[[79,'26 19:00'],[152,'29 19:00'],[227,'3 19:00'],[275,'5 19:00'],[328,'9 19:00'],[375,'11 19:00'],[451,'16 19:00'],[524,'19 19:00'],[600,'24 19:00'],[671,'29 15:00'],[747,'2 19:00'],[795,'6 15:00'],[847,'8 19:00'],[895,'10 19:00'],[971,'15 19:00'],[1043,'20 15:00'],[1119,'23 19:00'],[1195,'28 19:00'],[1267,'31 19:00'],[1343,'5 18:00'],[1391,'7 18:00'],[1443,'11 18:00'],[1515,'14 18:00']].forEach(([x, t]) => {
    rect(x, 983, 1, 11, '#000');
    text(x + 1, 993, t, 'date-text');
});
rect(3, 977, 13, 17, '#fff');

// Scroll buttons in the corner
rect(1886, 980, 16, 15, '#2808a0');
rect(1902, 980, 15, 15, '#a01808');
out += '<path d="M1889.500 983.500h9v9h-9zM1891.500 985v6M1897 988h-4l2-2M1893 988l2 2M1905.500 983.500h9v9h-9zM1907 988h5l-2-2M1912 988l-2 2" fill="none" stroke="#fff"/>';

// ---------- Labels ----------
levels.forEach(([y, label]) => text(3, y + 11, label, 'level-text'));
text(8, 104, 'Locked', 'locked-text');

rect(3, 80, 28, 11, '#666');
rect(3, 79, 27, 11, '#fff');
text(4, 88, 'Data', 'info-text');
rect(3, 844, 34, 12, '#aaa');
rect(3, 843, 32, 12, '#fff');
text(4, 852, 'MACD', 'info-text');

out += '<rect x="3" y="763" width="120" height="78" fill="#ff8080" fill-opacity=".66"/>';
text(6, 773, '15/10/2019 23:00', 'info-text');
['Open: 108.69', 'High: 108.77', 'Low: 108.60', 'Close: 108.65', 'Vol.: 6232'].forEach((t, i) => text(6, 789 + i * 12, t, 'info-text'));

svg.innerHTML = out;
```
